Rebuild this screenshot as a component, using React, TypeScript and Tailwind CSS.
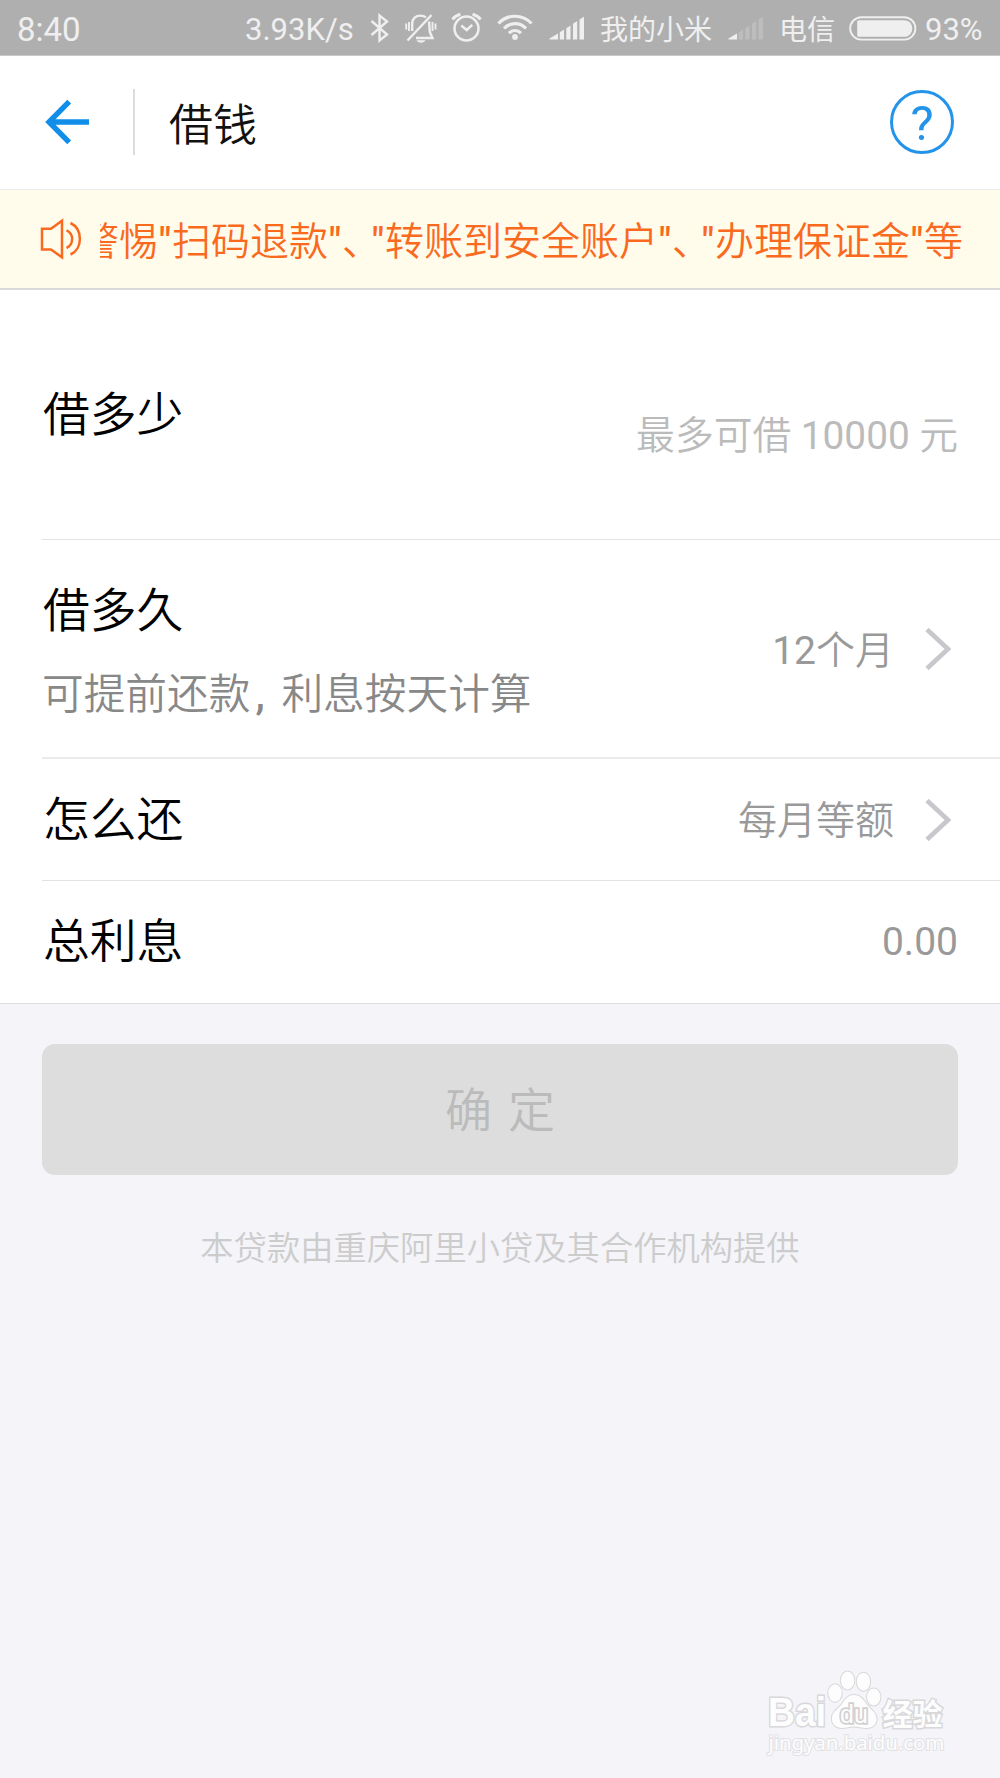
import type { ReactNode } from "react";

function BluetoothIcon() {
  return (
    <svg className="ml-[18px] h-[30px] w-[20px] shrink-0" viewBox="0 0 20 30" fill="none" stroke="#efefef" strokeWidth="2.4">
      <path d="M1.5 8 L17 21.5 L9.5 27.5 V2.5 L17 8.5 L1.5 22" />
    </svg>
  );
}

function SilentIcon() {
  return (
    <svg className="-mt-[2px] ml-[14px] h-[32px] w-[33px] shrink-0" viewBox="0 0 33 32" fill="none" stroke="#efefef" strokeWidth="2.4">
      <path d="M8.2 20 V13 C8.2 7 12 4.6 16.5 4.6 C18.7 4.6 20.5 5.2 22 6.4" />
      <path d="M25 10.5 C25.6 14 25.2 18 26 21.5 L28.5 27 H12" />
      <path d="M3.5 29.5 L27.5 4" />
      <path d="M12.5 29.3 H21.5 C20 32.5 14 32.5 12.5 29.3 Z" fill="#efefef" stroke="none" />
      <path d="M5 11 V20 M2.2 12.5 V18.5 M28.5 11 V20 M31.5 12.5 V18.5" strokeWidth="1.9" />
    </svg>
  );
}

function AlarmIcon() {
  return (
    <svg className="-mt-[3px] ml-[14px] h-[32px] w-[32px] shrink-0" viewBox="0 0 32 32" fill="none" stroke="#efefef" strokeWidth="2.5">
      <circle cx="15.5" cy="18.5" r="12" />
      <path d="M1.5 9.5 C3.5 6.5 6 5 9.4 4.2 M29.5 9.5 C27.5 6.5 25 5 21.6 4.2" strokeWidth="3" />
      <path d="M10.3 15.5 L15.7 20 L21.3 14.8" />
    </svg>
  );
}

function WifiIcon() {
  return (
    <svg className="-mt-[3px] ml-[14px] h-[32px] w-[36px] shrink-0" viewBox="0 0 36 32" fill="none" stroke="#efefef" strokeWidth="3.2">
      <path d="M1.5 13.5 C10.5 3.8 25.5 3.8 34.5 13.5" />
      <path d="M7 18.5 C13 12 23 12 29 18.5" />
      <path d="M12 23.2 C15.5 19.6 20.5 19.6 24 23.2" />
      <circle cx="18" cy="27" r="2.9" fill="#efefef" stroke="none" />
    </svg>
  );
}

function SignalIcon({ weak = false }: { weak?: boolean }) {
  const rest = weak ? "#bdbdbd" : "#efefef";
  return (
    <svg className="ml-[16px] h-[24px] w-[36px] shrink-0" viewBox="0 0 36 24">
      <path d="M0.5 23.5 V22.5 L9 17.5 V23.5 Z" fill="#efefef" />
      <path d="M10.8 16.2 L15 13.6 V23.5 H10.8 Z" fill={rest} />
      <path d="M17.3 12.2 L21.5 9.5 V23.5 H17.3 Z" fill={rest} />
      <path d="M24 7.8 L28.2 5 V23.5 H24 Z" fill={rest} />
      <path d="M30.5 3.5 L35 0.8 V23.5 H30.5 Z" fill={rest} />
    </svg>
  );
}

function BatteryIcon() {
  return (
    <svg className="mt-[1px] ml-[14px] h-[25px] w-[68px] shrink-0" viewBox="0 0 68 25">
      <rect x="1.2" y="1.2" width="65.2" height="22.4" rx="11.2" fill="none" stroke="#efefef" strokeWidth="1.9" />
      <path d="M10 4.2 H55 C66 4.2 66 20.8 55 20.8 H10 C8.8 20.8 8.2 20 8.2 19 V6 C8.2 5 8.8 4.2 10 4.2 Z" fill="#efefef" />
    </svg>
  );
}

function StatusBar() {
  return (
    <div className="flex h-[56px] shrink-0 items-center border-b border-[#c9c9c9] bg-[#afafaf] pl-[17px] text-[31px] leading-[36px] font-normal whitespace-nowrap text-[#efefef]">
      <span className="mt-[4px] w-[228px] text-[33px]">8:40</span>
      <span className="mt-[4px] w-[107px]">3.93K/s</span>
      <BluetoothIcon />
      <SilentIcon />
      <AlarmIcon />
      <WifiIcon />
      <SignalIcon />
      <span className="mt-[6px] ml-[15px] w-[112px] text-[28px]">我的小米</span>
      <SignalIcon weak />
      <span className="mt-[6px] ml-[15px] w-[56px] text-[28px]">电信</span>
      <BatteryIcon />
      <span className="mt-[4px] ml-[8px] text-[31px]">93%</span>
    </div>
  );
}

function Header() {
  return (
    <header className="flex h-[134px] shrink-0 items-center border-b border-[#ebebeb] bg-white pr-[46px] pl-[44px]">
      <svg className="-mt-[2px] h-[48px] w-[48px]" viewBox="0 0 48 48" fill="none" stroke="#108ee9" strokeWidth="5.4">
        <path d="M45 24 H6 M25.2 3.7 L5 24 L25.2 44.3" />
      </svg>
      <div className="-mt-[1px] ml-[41px] h-[66px] w-[2px] bg-[#dcdcdc]" />
      <h1 className="mt-[6px] ml-[34px] flex-1 text-[44px] leading-[60px] text-[#111]">借钱</h1>
      <div className="-mt-[2px] flex h-[64px] w-[64px] items-center justify-center rounded-full border-[3px] border-[#2494ea] text-[49px] leading-[60px] font-normal text-[#2494ea]">
        <span className="mt-[4px]">?</span>
      </div>
    </header>
  );
}

function Quote() {
  return <span className="inline-block w-[14px] text-center font-medium">"</span>;
}

function ListComma() {
  return <span className="inline-block w-[29px]">、</span>;
}

function Notice() {
  return (
    <div className="flex h-[100px] shrink-0 items-center border-b-2 border-[#d9d9d9] bg-[#fffcec] pl-[39px] text-[#fa6a1e]">
      <svg className="h-[44px] w-[44px]" viewBox="0 0 44 44" fill="none" stroke="#fa6a1e" strokeWidth="2.5">
        <path d="M3 11.7 H12 L23 3.7 V40.3 L12 32.5 H3 Z" />
        <path d="M27.5 13.3 C35 16.5 35 27.5 27.5 31" />
        <path d="M31.5 6 C44 12 44 32 31.5 37.5" />
      </svg>
      <div className="mt-[5px] ml-[17px] w-[864px] overflow-hidden">
        <p className="-ml-[20px] text-[39px] leading-[56px] whitespace-nowrap">
          警惕<Quote />扫码退款<Quote /><ListComma /><Quote />转账到安全账户<Quote /><ListComma /><Quote />办理保证金<Quote />等骗局
        </p>
      </div>
    </div>
  );
}

function Chevron() {
  return (
    <svg className="ml-[30px] h-[44px] w-[28px]" viewBox="0 0 28 44" fill="none" stroke="#c7c7cc" strokeWidth="4.6">
      <path d="M3 2.500 L24 22 L3 41.500" />
    </svg>
  );
}

function Value({ children }: { children: ReactNode }) {
  return <span className="text-[39px] leading-[56px] text-[#999]">{children}</span>;
}

function Label({ children }: { children: ReactNode }) {
  return <div className="pl-[1px] text-[46.8px] leading-[64px] text-black">{children}</div>;
}

export default function App() {
  return (
    <div className="relative flex h-[1778px] w-[1000px] flex-col overflow-hidden bg-[#f4f4f9] font-['Roboto','Noto_Sans_CJK_SC',sans-serif] font-[350]">
      <StatusBar />
      <Header />
      <Notice />

      <main className="flex flex-col border-b border-[#dedede] bg-white pl-[42px]">
        <div className="flex h-[250px] justify-between border-b border-[#e2e2e2] pr-[42px]">
          <div className="pt-[93px]">
            <Label>借多少</Label>
          </div>
          <span className="pt-[118px] text-[38.8px] leading-[56px] text-[#bbb]">
            最多可借 <span className="font-normal">10000</span> 元
          </span>
        </div>
        <div className="flex h-[219px] items-center justify-between border-b-2 border-[#ebebeb] pr-[48px]">
          <div className="flex flex-col gap-[22px] pt-[7px]">
            <Label>借多久</Label>
            <div className="text-[41.7px] leading-[60px] text-[#888]">
              可提前还款<span className="inline-block w-[31px] pl-[5px] font-medium">,</span>利息按天计算
            </div>
          </div>
          <div className="flex items-center">
            <div className="pt-[4px]">
              <Value><span className="font-normal">12</span>个月</Value>
            </div>
            <Chevron />
          </div>
        </div>
        <div className="flex h-[122px] items-center justify-between border-b border-[#e2e2e2] pr-[48px]">
          <Label>怎么还</Label>
          <div className="flex items-center">
            <div className="pt-[2px]">
              <Value>每月等额</Value>
            </div>
            <Chevron />
          </div>
        </div>
        <div className="flex h-[122px] items-center justify-between pr-[42px]">
          <Label>总利息</Label>
          <Value><span className="font-normal">0.00</span></Value>
        </div>
      </main>

      <button className="mx-[42px] mt-[40px] flex h-[131px] shrink-0 items-center justify-center gap-[16px] rounded-[13px] bg-[#ddd] pt-[3px] text-[47px] text-[#bbb]">
        <span>确</span>
        <span>定</span>
      </button>
      <p className="mt-[50px] text-center text-[33.3px] leading-[48px] text-[#ccc]">本贷款由重庆阿里小贷及其合作机构提供</p>

      <svg
        className="absolute top-[1664px] left-[760px] h-[100px] w-[200px]"
        viewBox="0 0 200 100"
        fill="#fdfdfd"
        stroke="#d8d8db"
        strokeWidth="2"
        style={{ paintOrder: "stroke" }}
      >
        <text x="8" y="62" fontFamily="Liberation Sans" fontWeight="700" fontSize="40" textLength="58" lengthAdjust="spacingAndGlyphs" strokeWidth="3">Bai</text>
        <ellipse cx="75" cy="29" rx="6.7" ry="8.8" />
        <ellipse cx="87.6" cy="16.5" rx="6.7" ry="9" />
        <ellipse cx="103.5" cy="17.7" rx="6.7" ry="9" />
        <ellipse cx="113.7" cy="33" rx="6.7" ry="8.5" />
        <path d="M94 31 C100 31 103 35 106.5 40 C110 45 116 48 116.5 54 C117 61 112 64 106 64 C102 64 98 62.5 94 62.5 C90 62.5 86 64 82 64 C76 64 71 60 72 53 C73 47 78 45 82 40 C85.5 35 88 31 94 31 Z" />
        <text x="80" y="58.5" fontFamily="Liberation Sans" fontWeight="400" fontSize="25" textLength="28" strokeWidth="3.4" stroke="#d0d0d3">du</text>
        <text x="122.5" y="60.5" fontFamily="Noto Sans CJK SC" fontWeight="700" fontSize="30" strokeWidth="3">经验</text>
        <text x="8.5" y="86" fontFamily="Noto Sans" fontWeight="400" fontSize="20.5" textLength="176" stroke="#e2e2e5" strokeWidth="2.2">jingyan.baidu.com</text>
      </svg>
    </div>
  );
}
